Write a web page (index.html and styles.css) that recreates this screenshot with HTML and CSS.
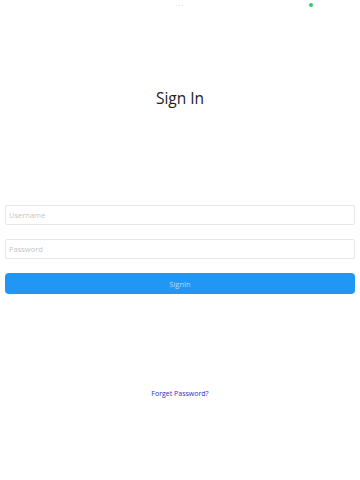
FILE: index.html
```html
<!DOCTYPE html>
<html lang="en">
<head>
    <meta charset="UTF-8">
    <meta name="viewport" content="width=device-width, initial-scale=1.0">
    <title>Sign In</title>
    <link rel="stylesheet" href="styles.css">
</head>
<body>
    <div id="statusBar">
        <span class="dots"><i></i><i></i><i></i></span>
        <span class="online"></span>
    </div>

    <h1 id="title">Sign In</h1>

    <form id="loginForm">
        <input type="text" class="field" placeholder="Username">
        <input type="password" class="field" placeholder="Password">
        <button type="button" id="signInButton">SignIn</button>
    </form>

    <a href="#" id="forgotLink">Forget Password?</a>
</body>
</html>
```

FILE: styles.css
```css
body {
    margin: 0;
    font-family: "Open Sans", "Liberation Sans", sans-serif;
    background-color: #fff;
    color: #222;
    display: flex;
    flex-direction: column;
    align-items: center;
}
#statusBar {
    width: 100%;
    height: 10px;
    display: flex;
    align-items: center;
    justify-content: flex-end;
    position: relative;
}
.dots {
    position: absolute;
    left: 176px;
    top: 5px;
    display: flex;
    gap: 2px;
}
.dots i {
    width: 1px;
    height: 1px;
    background-color: #ddd;
}
.online {
    width: 4px;
    height: 4px;
    border-radius: 50%;
    background-color: #2ecc71;
    margin-right: 47px;
}
#title {
    font-size: 15.5px;
    font-weight: normal;
    margin: 77px 0 0; /* puts title around y=98 */
    line-height: 22px;
}
#loginForm {
    width: 350px;
    margin-top: 96px;
    display: flex;
    flex-direction: column;
}
.field {
    height: 20px;
    box-sizing: border-box;
    border: 1px solid #e8e8e8;
    border-radius: 2px;
    padding: 0 3px;
    font-family: inherit;
    font-size: 7.5px;
    margin-bottom: 14px;
    outline: none;
}
.field::placeholder {
    color: #c4c4c4;
}
#signInButton {
    height: 21px;
    border: none;
    border-radius: 4px;
    background-color: #2196f3;
    color: #b9dcfb;
    font-family: inherit;
    font-size: 7.5px;
    cursor: pointer;
}
#forgotLink {
    margin-top: 95px;
    font-size: 7px;
    color: #2c2ccf;
    text-decoration: none;
}
```
